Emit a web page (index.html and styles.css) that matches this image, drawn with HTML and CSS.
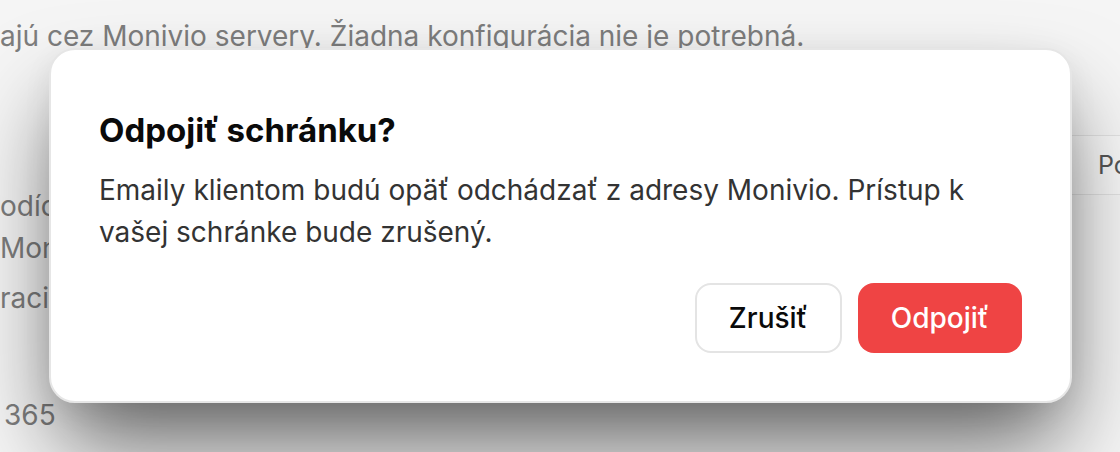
FILE: index.html
```html
<!DOCTYPE html>
<html lang="sk">
<head>
    <meta charset="UTF-8">
    <title>Odpojiť schránku</title>
    <link rel="stylesheet" href="styles.css">
</head>
<body>
    <div class="page">
        <p class="note">ajú cez Monivio servery. Žiadna konfigurácia nie je potrebná.</p>

        <div class="settings-row">
            <div class="side-text">
                <p class="line">odíc</p>
                <p class="line">Mon</p>
                <p class="line line-gap">racia</p>
            </div>
            <div class="side-box">Po</div>
        </div>

        <p class="provider">365</p>
    </div>

    <div class="modal">
        <h2 class="modal-title">Odpojiť schránku?</h2>
        <p class="modal-text">Emaily klientom budú opäť odchádzať z adresy Monivio. Prístup k vašej schránke bude zrušený.</p>
        <div class="modal-actions">
            <button class="btn btn-cancel">Zrušiť</button>
            <button class="btn btn-danger">Odpojiť</button>
        </div>
    </div>
</body>
</html>
```

FILE: styles.css
```css
body {
    margin: 0;
    font-family: Inter, 'Noto Sans', sans-serif;
    background: #f5f5f5;
    height: 452px;
    overflow: hidden;
    position: relative;
}

.page {
    color: #7d7d7d;
    font-size: 28px;
}

.note {
    margin: 0;
    padding-top: 17px;
    line-height: 38px;
}

.settings-row {
    display: flex;
    justify-content: space-between;
    margin-top: 80px;
}

.side-text {
    width: 49px;
    overflow: hidden;
    white-space: nowrap;
    padding-top: 50px;
}

.line {
    margin: 0;
    line-height: 42px;
}

.line-gap {
    margin-top: 8px;
}

.side-box {
    width: 22px;
    height: 58px;
    border-top: 1px solid #e2e2e2;
    border-bottom: 1px solid #e2e2e2;
    background: #f7f7f7;
    color: #555;
    font-size: 25px;
    line-height: 58px;
    padding-left: 27px;
    overflow: hidden;
    white-space: nowrap;
}

.provider {
    margin: 80px 0 0 4px;
    line-height: 32px;
}

.modal {
    position: absolute;
    left: 49px;
    top: 48px;
    width: 1023px;
    box-sizing: border-box;
    padding: 56px 48px 48px;
    background: white;
    border: 2px solid #e6e6e6;
    border-radius: 26px;
    box-shadow: 0 50px 90px -10px rgba(0, 0, 0, 0.6), 0 8px 30px rgba(0, 0, 0, 0.06);
}

.modal-title {
    margin: 0;
    font-size: 33px;
    font-weight: 700;
    line-height: 48px;
    color: #0a0a0a;
}

.modal-text {
    margin: 15px 0 0;
    font-size: 28px;
    line-height: 42px;
    color: #333;
}

.modal-actions {
    display: flex;
    justify-content: flex-end;
    gap: 16px;
    margin-top: 30px;
}

.btn {
    height: 70px;
    padding: 0 32px;
    border-radius: 16px;
    font-family: inherit;
    font-size: 28px;
    font-weight: 500;
    cursor: pointer;
}

.btn-cancel {
    background: white;
    border: 2px solid #e4e4e4;
    color: #0a0a0a;
}

.btn-danger {
    background: #ef4444;
    border: none;
    color: white;
    padding: 0 33px;
}
```
